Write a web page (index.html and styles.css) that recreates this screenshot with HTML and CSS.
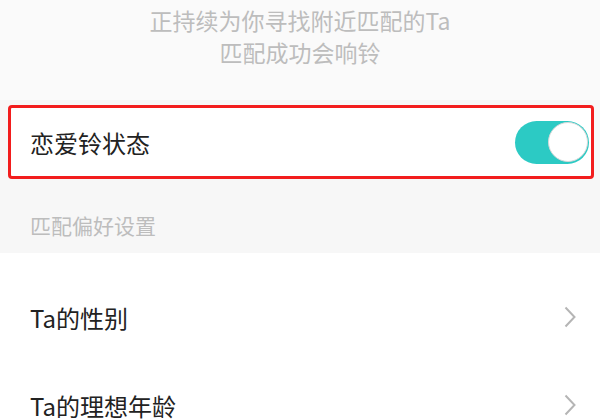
FILE: index.html
```html
<!DOCTYPE html>
<html lang="zh-CN">
  <head>
    <meta charset="UTF-8" />
    <meta name="viewport" content="width=device-width, initial-scale=1.0" />
    <title>恋爱铃</title>
    <link rel="stylesheet" href="styles.css">
  </head>
  <body>
    <div class="tip">
      <p>正持续为你寻找附近匹配的Ta</p>
      <p>匹配成功会响铃</p>
    </div>

    <div class="status">
      <span>恋爱铃状态</span>
      <div class="switch on"><div class="knob"></div></div>
    </div>

    <div class="section-title">匹配偏好设置</div>

    <div class="list">
      <div class="row">
        <span>Ta的性别</span>
        <svg class="arrow" viewBox="0 0 12 22" width="12" height="22">
          <path d="M1.5 1.5 L10.5 11 L1.5 20.5" fill="none" stroke="#b5b5b5" stroke-width="2" />
        </svg>
      </div>
      <div class="row">
        <span>Ta的理想年龄</span>
        <svg class="arrow" viewBox="0 0 12 22" width="12" height="22">
          <path d="M1.5 1.5 L10.5 11 L1.5 20.5" fill="none" stroke="#b5b5b5" stroke-width="2" />
        </svg>
      </div>
    </div>
  </body>
</html>
```

FILE: styles.css
```css
body {
  font-family: "Noto Sans CJK SC", "Noto Sans", sans-serif;
  margin: 0;
  padding: 0;
  background-color: #f7f7f7;
  color: #222;
  overflow: hidden;
}
.tip {
  text-align: center;
  color: #bdbdbd;
  font-size: 23px;
  line-height: 32px;
  padding-top: 4px;
  height: 100px;
  box-sizing: border-box;
  background-color: #fafafa;
}
.tip p {
  margin: 0;
}
.status {
  margin: 5px 6px 0 8px;
  height: 74px;
  box-sizing: border-box;
  border: 3.5px solid #f21d1d;
  border-radius: 4px;
  background-color: #fff;
  display: flex;
  align-items: center;
  justify-content: space-between;
  padding: 0 2px 0 19px;
  font-size: 24px;
}
.switch {
  width: 74px;
  height: 43px;
  border-radius: 22px;
  background-color: #e0e0e0;
  display: flex;
  align-items: center;
  padding: 0 1px;
  box-sizing: border-box;
}
.switch.on {
  background-color: #2ccac4;
  justify-content: flex-end;
}
.knob {
  width: 40px;
  height: 40px;
  border-radius: 50%;
  background-color: #fff;
  box-sizing: border-box;
  border: 1px solid #d8d8d8;
}
.section-title {
  height: 74px;
  padding: 31px 0 0 30px;
  box-sizing: border-box;
  font-size: 21px;
  color: #bdbdbd;
}
.list {
  background-color: #fff;
  padding-top: 20px;
}
.row {
  height: 88px;
  display: flex;
  align-items: center;
  justify-content: space-between;
  padding: 0 24px 0 30px;
  font-size: 24px;
}
```
